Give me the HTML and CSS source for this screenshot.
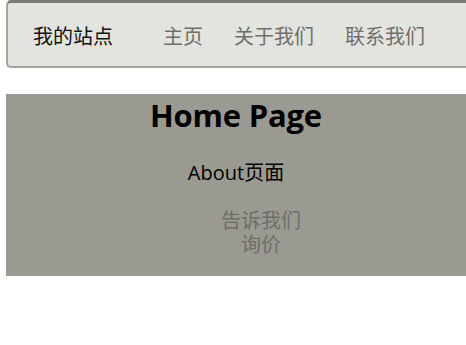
FILE: index.html
```html
<!DOCTYPE html>
<html lang="zh">
<head>
<meta charset="utf-8">
<title>我的站点</title>
<link rel="stylesheet" href="styles.css">
</head>
<body>
<nav class="navbar">
  <span class="brand">我的站点</span>
  <ul class="nav-links">
    <li><a href="#">主页</a></li>
    <li><a href="#">关于我们</a></li>
    <li><a href="#">联系我们</a></li>
  </ul>
</nav>
<section class="content">
  <h1 class="title">Home Page</h1>
  <p class="subtitle">About页面</p>
  <ul class="contact-list">
    <li><a href="#">告诉我们</a></li>
    <li><a href="#">询价</a></li>
  </ul>
</section>
</body>
</html>
```
FILE: styles.css
```css
body {
  margin: 0;
  padding: 0 0 0 6px;
  background: #ffffff;
  font-family: "Open Sans", "Noto Sans CJK SC", sans-serif;
  font-size: 20px;
  color: #111111;
}
.navbar {
  display: flex;
  align-items: center;
  padding: 22px 0 17px 25px;
  background: #e3e3df;
  border: 2px solid #a4a49c;
  border-right: 0;
  border-top: 3px solid #7c7c75;
  border-radius: 5px 0 0 5px;
  line-height: 24px;
}
.brand {
  color: #111111;
  margin-right: 50px;
}
.nav-links {
  display: flex;
  gap: 31px;
  margin: 0;
  padding: 0;
  list-style: none;
}
.nav-links a {
  color: #707069;
  text-decoration: none;
}
.content {
  margin-top: 26px;
  padding: 0 0 19px;
  background: #9a9a92;
  text-align: center;
}
.title {
  margin: 0;
  font-size: 31px;
  line-height: 42px;
  font-weight: 700;
  letter-spacing: -0.2px;
  color: #000000;
}
.subtitle {
  margin: 25px 0 0;
  line-height: 24px;
  color: #000000;
}
.contact-list {
  margin: 24px 0 0;
  padding: 0 0 0 50px;
  list-style: none;
  line-height: 24px;
}
.contact-list a {
  color: #6e6e68;
  text-decoration: none;
}
```
